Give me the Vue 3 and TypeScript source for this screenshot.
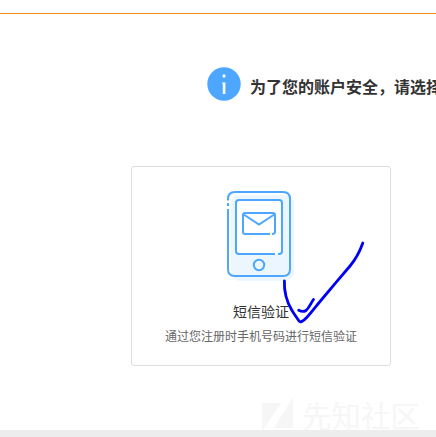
<script setup lang="ts">
const heading: string = '为了您的账户安全，请选择'
const method = { title: '短信验证', description: '通过您注册时手机号码进行短信验证' }
</script>

<template>
  <div class="page">
    <header class="topbar"></header>
    <main class="content">
      <div class="notice">
        <svg class="info" viewBox="0 0 34 34">
          <circle cx="17" cy="17" r="16.7" fill="#4da6ff" />
          <rect x="15.6" y="7.6" width="2.8" height="3" rx=".5" fill="#fff" />
          <path d="M15.2 15.6H18.4V27H15.8V16.8H15.2Z" fill="#fff" />
        </svg>
        <h1>{{ heading }}</h1>
      </div>
      <section class="card">
        <svg class="phone" viewBox="0 0 68 91" fill="none" stroke="#4da6ff" stroke-width="2" stroke-linecap="butt">
          <rect x="4" y="4" width="63" height="86" rx="9" fill="#ebf6ff" stroke="none" />
          <path d="M1 9.5V8Q1 1 8 1H56Q63 1 63 8V78Q63 85 56 85H8Q1 85 1 78V18M1 15V12" />
          <path d="M48 63H12Q9 63 9 60V12Q9 9 12 9H52Q55 9 55 12V60Q55 63 52 63H51" fill="#fff" />
          <path d="M43 43H18Q16 43 16 41V24Q16 22 18 22H46Q48 22 48 24V41Q48 43 45 43M16 23L32 33.5L48 23" />
          <circle cx="32" cy="74" r="5.2" />
        </svg>
        <h2>{{ method.title }}</h2>
        <p>{{ method.description }}</p>
      </section>
    </main>
    <footer class="footer"></footer>
    <svg class="checkmark" viewBox="0 0 90 90" fill="none" stroke="#0000f5" stroke-width="2.8" stroke-linecap="round" stroke-linejoin="round">
      <path d="M4.4 6C4 16 7 27 11.7 35C14 39 17 43 19 46Q21 48.5 26.7 42.5C31 38 36 31 40 26.5L56.7 6.7L70 -9C75 -15 80 -24 82.8 -32" />
      <path d="M18.7 35.3Q23 37.5 26 35.5C29 33 31 28 33.5 24.5" />
    </svg>
    <div class="watermark">
      <svg viewBox="0 0 32 34" fill="#f6f6f6">
        <path d="M0 6H19L0 34ZM31 0V31H12Z" />
      </svg>
      <span>先知社区</span>
    </div>
  </div>
</template>

<style>
body {
  margin: 0;
  overflow: hidden;
  background: #fff;
}
</style>

<style scoped>
.page {
  position: relative;
  display: flex;
  flex-direction: column;
  width: 436px;
  height: 437px;
  overflow: hidden;
  box-sizing: border-box;
  font-family: "Noto Sans CJK SC", sans-serif;
}
.topbar {
  flex: none;
  height: 13px;
  border-bottom: 1px solid #f08a24;
}
.content {
  flex: 1;
  padding: 53px 0 0 131px;
}
.notice {
  display: flex;
  align-items: center;
  gap: 9px;
  padding-left: 76px;
  height: 34px;
}
.info {
  flex: none;
  width: 34px;
  height: 34px;
}
h1 {
  margin: 3px 0 0;
  font-size: 16px;
  line-height: 24px;
  font-weight: 700;
  color: #333;
  white-space: nowrap;
}
.card {
  display: flex;
  flex-direction: column;
  align-items: center;
  box-sizing: border-box;
  width: 260px;
  height: 200px;
  margin-top: 65px;
  padding-top: 24px;
  border: 1px solid #ddd;
  border-radius: 3px;
}
.phone {
  flex: none;
  width: 68px;
  height: 91px;
}
h2 {
  margin: 19px 0 0;
  font-size: 14px;
  line-height: 20px;
  font-weight: 400;
  color: #333;
}
p {
  margin: 6px 0 0;
  font-size: 12px;
  line-height: 18px;
  color: #666;
}
.footer {
  flex: none;
  height: 7px;
  background: #ededed;
}
.checkmark {
  position: absolute;
  left: 280px;
  top: 275px;
  width: 90px;
  height: 90px;
  overflow: visible;
}
.watermark {
  position: absolute;
  left: 262px;
  top: 397px;
  display: flex;
  gap: 8px;
  color: #f6f6f6;
  font-size: 29.5px;
  line-height: 34px;
  white-space: nowrap;
}
.watermark svg {
  width: 32px;
  height: 34px;
}
</style>
